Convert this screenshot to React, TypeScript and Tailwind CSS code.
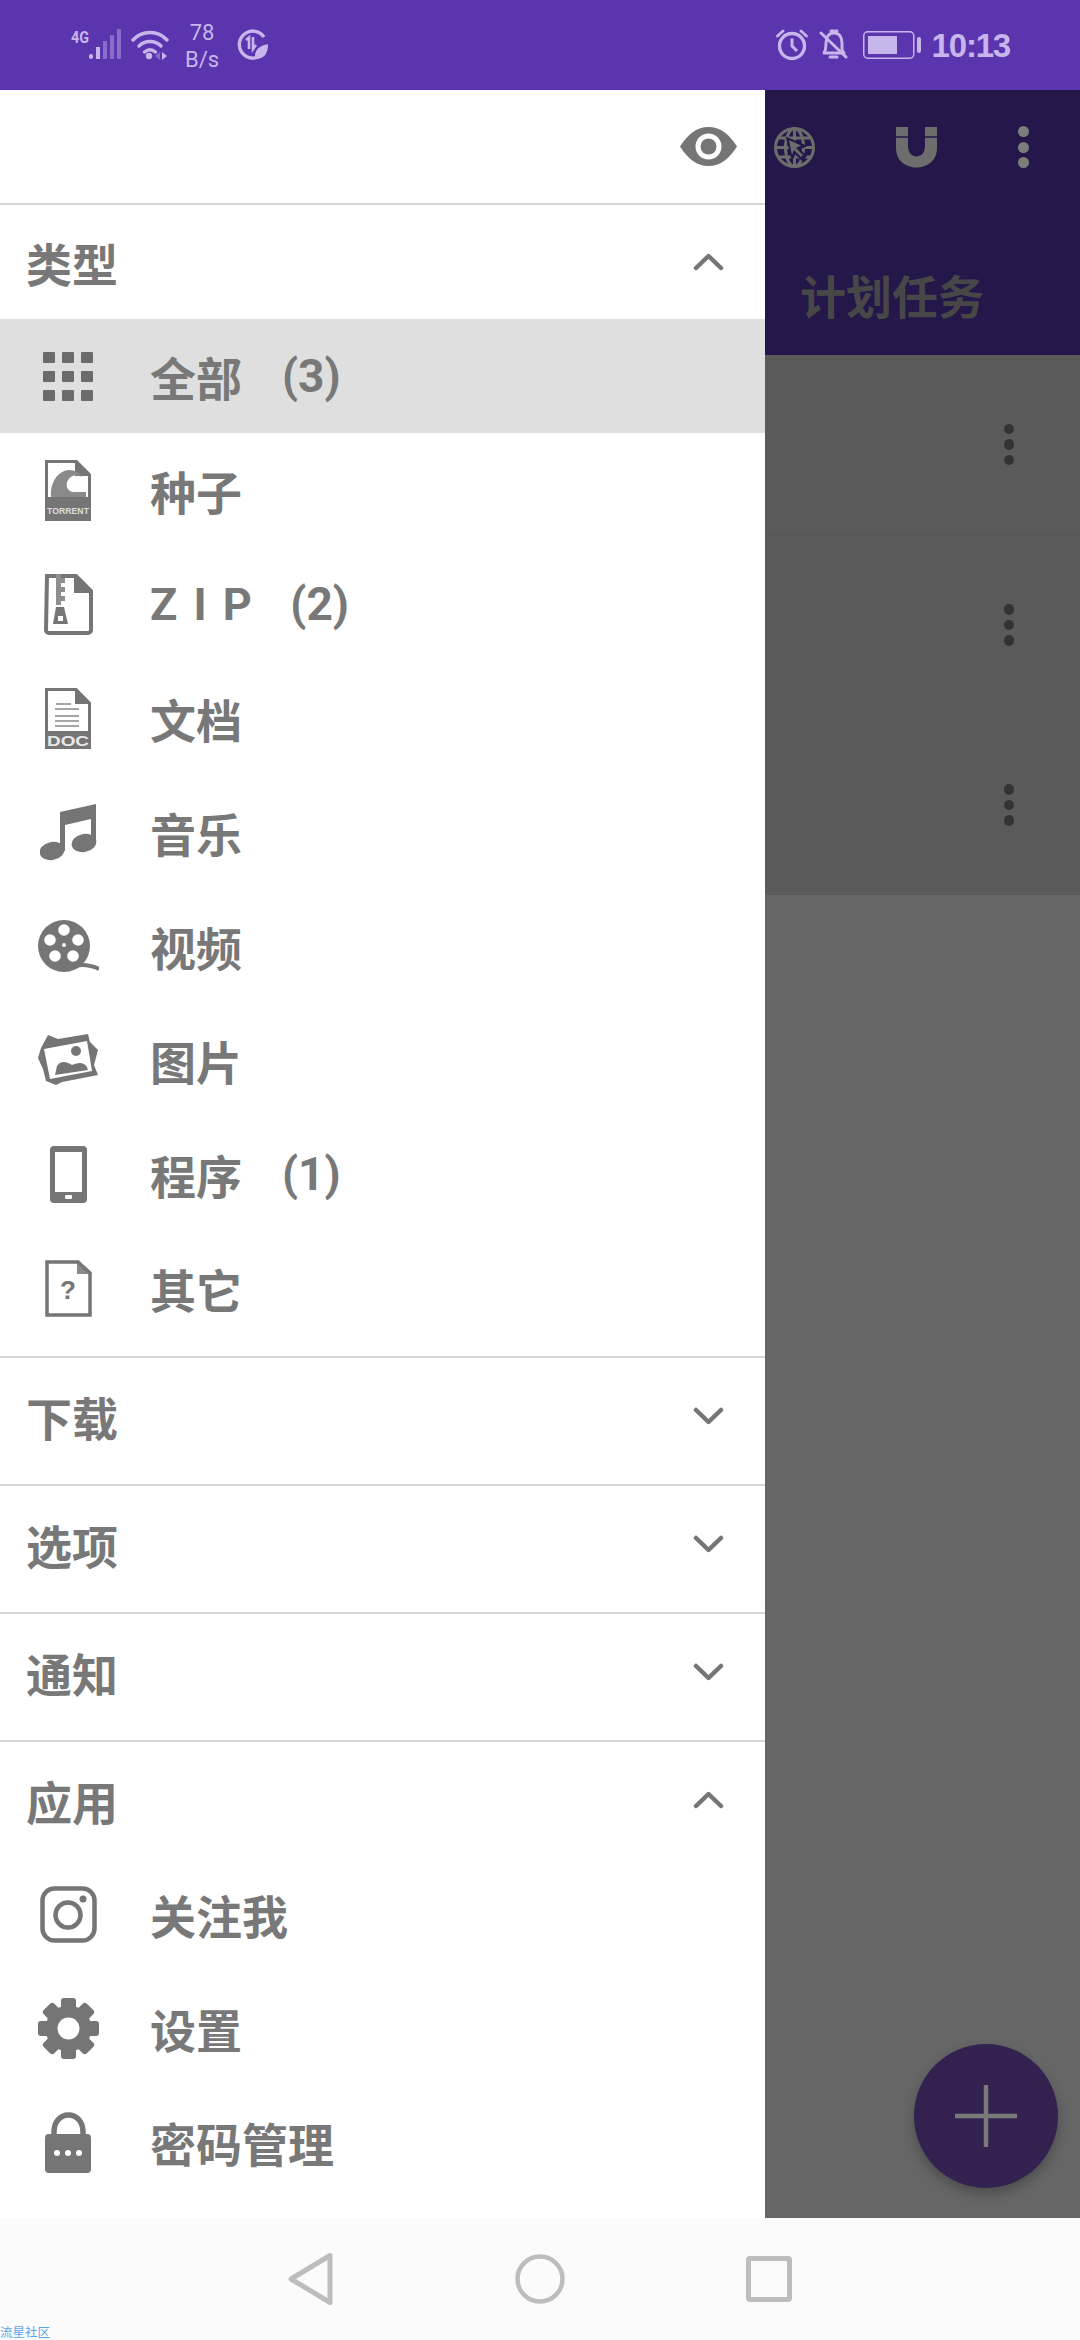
import React from "react";

const G = "#757575";

type IconProps = { w: number; h: number; children: React.ReactNode };
const Svg = ({ w, h, children }: IconProps) => (
  <svg width={w} height={h} viewBox={`0 0 ${w} ${h}`} className="block shrink-0">
    {children}
  </svg>
);

const GridIcon = () => (
  <Svg w={50} h={49}>
    {[0, 19, 38].flatMap((y) =>
      [0, 19, 38].map((x) => <rect key={`${x}-${y}`} x={x} y={y} width={12} height={11} rx={1} fill="#6b6b6b" />)
    )}
  </Svg>
);

const TorrentIcon = () => (
  <Svg w={46} h={61}>
    <path d="M0 0H32L46 14V61H0Z" fill={G} />
    <path d="M3 3H30V16H43V37H3Z" fill="#fff" />
    <path d="M6 37C5 22 13 11 24 10C30 10 35 13 37 17C32 14 26 15 23 20C20 25 22 31 28 32H41V37Z" fill="#8a8a8a" />
    <text x="23" y="54" textAnchor="middle" fontSize="9" fontWeight="700" fill="#ddd" fontFamily="Liberation Sans, sans-serif" textLength="42" lengthAdjust="spacingAndGlyphs">TORRENT</text>
  </Svg>
);

const ZipIcon = () => (
  <Svg w={49} h={61}>
    <path d="M3 2H32L47 17V56a3 3 0 0 1-3 3H5a3 3 0 0 1-3-3Z" fill="none" stroke={G} strokeWidth="4" />
    <path d="M30 1L48 19H30Z" fill={G} />
    <path d="M12 0H17V4H21V9H17V13H21V18H17V22H21V27H17V31H12Z" fill="#8f8f8f" />
    <path d="M12 33H20L24 50H9Z" fill={G} />
    <rect x="14" y="42" width="5" height="5" fill="#fff" />
  </Svg>
);

const DocIcon = () => (
  <Svg w={46} h={61}>
    <path d="M1.5 1.5H31L44.5 15V59.5H1.5Z" fill="#fff" stroke={G} strokeWidth="3" />
    <path d="M30 0L46 16H30Z" fill={G} />
    <path d="M11 16H26M10 21H34M10 28H34M10 33H34M10 38H34" stroke="#a5a5a5" strokeWidth="2" />
    <rect x="0" y="43" width="46" height="18" fill={G} />
    <text x="23" y="58" textAnchor="middle" fontSize="15.5" fontWeight="700" fill="#e8e8e8" fontFamily="Liberation Sans, sans-serif" textLength="42" lengthAdjust="spacingAndGlyphs">DOC</text>
  </Svg>
);

const MusicIcon = () => (
  <Svg w={57} h={57}>
    <path d="M20 47V8L56 0V40H51V15L25 21V47Z" fill={G} />
    <ellipse cx="12" cy="47" rx="12.5" ry="9" fill={G} transform="rotate(-12 12 47)" />
    <ellipse cx="44" cy="39" rx="12.5" ry="9" fill={G} transform="rotate(-12 44 39)" />
  </Svg>
);

const FilmIcon = () => (
  <Svg w={61} h={52}>
    <circle cx="26" cy="26" r="26" fill={G} />
    {[
      [26, 10],
      [12, 20],
      [40, 20],
      [17, 36],
      [35, 36],
    ].map(([x, y]) => (
      <circle key={`${x}-${y}`} cx={x} cy={y} r="5.8" fill="#fff" />
    ))}
    <circle cx="26" cy="25" r="2" fill="#fff" />
    <path d="M34 47C42 44 50 44 61 49" fill="none" stroke={G} strokeWidth="4" />
  </Svg>
);

const ImageIcon = () => (
  <Svg w={61} h={52}>
    <path d="M10 1L20 5L50 0L52 8L60 16L56 31L60 41L50 43L24 48L18 51L8 47L5 35L0 24L3 14Z" fill={G} />
    <path d="M6 15L49 7L54 37L12 45Z" fill="#fff" />
    <circle cx="38" cy="17" r="5" fill={G} />
    <path d="M17 41L19 32C24 25 30 29 34 31C39 29 45 27 49 33L50 36Z" fill={G} />
  </Svg>
);

const PhoneIcon = () => (
  <Svg w={37} h={57}>
    <rect width="37" height="57" rx="4" fill={G} />
    <rect x="5" y="6" width="27" height="40" fill="#fff" />
    <rect x="15" y="49" width="7" height="4" rx="1" fill="#fff" />
  </Svg>
);

const OtherIcon = () => (
  <Svg w={47} h={57}>
    <path d="M2 2H33L45 13V55H2Z" fill="#fff" stroke={G} strokeWidth="3.5" />
    <path d="M32 0L47 14H32Z" fill={G} opacity="0.85" />
    <text x="23" y="39" textAnchor="middle" fontSize="26" fontWeight="700" fill={G} fontFamily="Liberation Sans, sans-serif">?</text>
  </Svg>
);

const InstaIcon = () => (
  <Svg w={57} h={57}>
    <rect x="2.5" y="2.5" width="52" height="52" rx="12" fill="none" stroke={G} strokeWidth="4.5" />
    <circle cx="28" cy="29" r="12.5" fill="none" stroke={G} strokeWidth="4.5" />
    <circle cx="43" cy="13" r="3.5" fill={G} />
  </Svg>
);

const GearIcon = () => (
  <Svg w={61} h={61}>
    <g transform="translate(30.5 30.5)">
      {[0, 45, 90, 135, 180, 225, 270, 315].map((a) => (
        <rect key={a} x={-7.5} y={-30.5} width={15} height={16} rx={3} fill={G} transform={`rotate(${a})`} />
      ))}
      <circle r="23" fill={G} />
      <circle r="11" fill="#fff" />
    </g>
  </Svg>
);

const LockIcon = () => (
  <Svg w={47} h={61}>
    <path d="M9 26V20C9 10 15 3 23.5 3S38 10 38 20V26" fill="none" stroke={G} strokeWidth="5.5" />
    <rect y="22" width="46" height="39" rx="4" fill={G} />
    <circle cx="12" cy="41" r="3" fill="#fff" />
    <circle cx="23" cy="41" r="3" fill="#fff" />
    <circle cx="34" cy="41" r="3" fill="#fff" />
  </Svg>
);

const EyeIcon = () => (
  <Svg w={57} h={39}>
    <path d="M0 19.5C8 7 17 0 28.5 0S49 7 57 19.5C49 32 40 39 28.5 39S8 32 0 19.5Z" fill={G} />
    <circle cx="28.5" cy="19.5" r="13" fill="#fff" />
    <circle cx="28.5" cy="19.5" r="8" fill={G} />
  </Svg>
);

const Chevron = ({ up }: { up?: boolean }) => (
  <Svg w={31} h={18}>
    <path d={up ? "M3 15L15.5 3L28 15" : "M3 3L15.5 15L28 3"} fill="none" stroke={G} strokeWidth="4.5" strokeLinecap="round" strokeLinejoin="round" />
  </Svg>
);

const Row = ({ icon, label, count, active }: { icon: React.ReactNode; label: React.ReactNode; count?: string; active?: boolean }) => (
  <div className={`flex h-[114px] items-center ${active ? "bg-[#dfdfdf]" : ""}`}>
    <div className="flex w-[136px] justify-center">{icon}</div>
    <div className="flex items-center pl-[14px] text-[46px] leading-none font-bold whitespace-pre text-[#787878]">
      {label}
      {count && <span className="ml-[40px] font-['Roboto',sans-serif] text-[46px]">{count}</span>}
    </div>
  </div>
);

const Section = ({ title, up, h }: { title: string; up?: boolean; h: string }) => (
  <div className={`flex items-center justify-between pr-[41px] pl-[26px] ${h}`}>
    <span className="text-[46px] leading-none font-bold text-[#787878]">{title}</span>
    <Chevron up={up} />
  </div>
);

const Dots = ({ color, gap, r }: { color: string; gap: string; r: string }) => (
  <div className={`flex flex-col ${gap}`}>
    {[0, 1, 2].map((i) => (
      <div key={i} className={`rounded-full ${r} ${color}`} />
    ))}
  </div>
);

const StatusLeft = () => (
  <div className="flex items-center pl-[71px]">
    <Svg w={52} h={32}>
      <text x="0" y="14" fontSize="16" fontWeight="700" fill="#c7b6ec" fontFamily="Roboto, sans-serif" textLength="18" lengthAdjust="spacingAndGlyphs">4G</text>
      <rect x="18" y="25" width="4" height="5" rx="2" fill="#c7b6ec" />
      <rect x="25" y="18" width="4" height="12" fill="#c7b6ec" />
      <rect x="32" y="12" width="4" height="18" fill="#8a6cc9" />
      <rect x="39" y="6" width="4" height="24" fill="#8a6cc9" />
      <rect x="46" y="0" width="4" height="30" fill="#8a6cc9" />
    </Svg>
    <div className="ml-[8px]">
      <Svg w={38} h={32}>
        <g fill="none" stroke="#c7b6ec" strokeWidth="3.4" strokeLinecap="round">
          <path d="M2 11C11 1 27 1 36 11" />
          <path d="M8 17C14 11 24 11 30 17" />
          <path d="M13.5 23C17 20 21 20 24.5 23" />
        </g>
        <circle cx="18" cy="27" r="3.2" fill="#c7b6ec" />
        <path d="M29 23V31L24 27Z" fill="#8a6cc9" />
        <path d="M31 23V31L36 27Z" fill="#c7b6ec" />
      </Svg>
    </div>
    <div className="ml-[15px] w-[36px] pt-[2px] text-center font-['Roboto',sans-serif] text-[22px] leading-[27px] text-[#c7b6ec]">
      <div>78</div>
      <div>B/s</div>
    </div>
    <div className="ml-[16px]">
      <Svg w={32} h={32}>
        <path d="M24 27A13.5 13.5 0 1 1 28 8" fill="none" stroke="#c7b6ec" strokeWidth="3.4" />
        <path d="M10 11L13 8.5V20M17 8V20L20 16" fill="none" stroke="#c7b6ec" strokeWidth="2.6" />
        <path d="M19 30C18 22 22 17 32 15C32 25 28 30 19 30Z" fill="#c7b6ec" />
      </Svg>
    </div>
  </div>
);

const StatusRight = () => (
  <div className="flex items-center pr-[70px]">
    <Svg w={32} h={32}>
      <circle cx="16" cy="17" r="12.5" fill="none" stroke="#c7b6ec" strokeWidth="3.4" />
      <path d="M16 9.5V17L21 22" fill="none" stroke="#c7b6ec" strokeWidth="3" />
      <path d="M1.5 7L7 2M30.5 7L25 2" stroke="#c7b6ec" strokeWidth="2.8" strokeLinecap="round" />
    </Svg>
    <div className="ml-[11px]">
      <Svg w={29} h={32}>
        <path d="M5 24C7 21 7 19 7 14C7 8 10 4 15 4C20 4 23 8 23 14V21L25 24Z" fill="none" stroke="#c7b6ec" strokeWidth="3" strokeLinejoin="round" />
        <path d="M12 2H18M11 28H18" stroke="#c7b6ec" strokeWidth="3" strokeLinecap="round" />
        <path d="M2 4L27 28" stroke="#c7b6ec" strokeWidth="3" strokeLinecap="round" />
      </Svg>
    </div>
    <div className="ml-[15px]">
      <Svg w={59} h={28}>
        <rect x="0.75" y="0.75" width="50" height="26.5" rx="4" fill="none" stroke="#c7b6ec" strokeWidth="1.5" />
        <rect x="5" y="5" width="29" height="18" fill="#c7b6ec" />
        <rect x="54" y="6" width="4" height="16" rx="2" fill="#c7b6ec" />
      </Svg>
    </div>
    <div className="ml-[10px] font-['Liberation_Sans',sans-serif] text-[33px] leading-none font-bold tracking-[-1.2px] text-[#c7b6ec]">10:13</div>
  </div>
);

const GlobeIcon = () => (
  <Svg w={41} h={41}>
    <g fill="none" stroke="#6d6d6d" strokeWidth="3">
      <circle cx="20.5" cy="20.5" r="19" />
      <ellipse cx="20.5" cy="20.5" rx="9" ry="19" />
      <path d="M20.5 1V40M3 11H38M3 30H38M1.5 20.5H39.5" />
    </g>
    <path d="M14 12L30 19L23.5 22L31 29L28 32L21 24.5L18.5 30Z" fill="#25174a" stroke="#25174a" strokeWidth="3" />
    <path d="M15 13L27 18.5L22 21L29 28L27 30L20 23L18 28Z" fill="#6d6d6d" />
  </Svg>
);

const MagnetIcon = () => (
  <Svg w={41} h={41}>
    <path d="M0 0H12V19C12 33 29 33 29 19V0H41V21C41 47 0 47 0 21Z" fill="#6d6d6d" />
    <path d="M0 10H12M29 10H41" stroke="#25174a" strokeWidth="1.6" />
  </Svg>
);

export default function App() {
  return (
    <div className="relative flex h-[2340px] w-[1080px] flex-col overflow-hidden bg-white font-['Noto_Sans_CJK_SC','Roboto',sans-serif]">
      <div className="flex h-[90px] shrink-0 items-center justify-between bg-[#5a35ae]">
        <StatusLeft />
        <StatusRight />
      </div>

      <div className="flex h-[2128px] shrink-0">
        <div className="flex w-[765px] shrink-0 flex-col bg-white">
          <div className="flex h-[115px] items-center justify-end border-b-2 border-[#d6d6d6] pr-[28px]">
            <EyeIcon />
          </div>
          <Section title="类型" up h="h-[114px]" />
          <Row icon={<GridIcon />} label="全部" count="(3)" active />
          <Row icon={<TorrentIcon />} label="种子" />
          <Row icon={<ZipIcon />} label={<span className="mr-[-4px] font-['Roboto',sans-serif] text-[45px] tracking-[2.5px]">Z I P</span>} count="(2)" />
          <Row icon={<DocIcon />} label="文档" />
          <Row icon={<MusicIcon />} label="音乐" />
          <Row icon={<FilmIcon />} label="视频" />
          <Row icon={<ImageIcon />} label="图片" />
          <Row icon={<PhoneIcon />} label="程序" count="(1)" />
          <Row icon={<OtherIcon />} label="其它" />
          <div className="mt-[11px] border-t-2 border-[#d6d6d6]"><Section title="下载" h="h-[126px] pb-[10px]" /></div>
          <div className="border-t-2 border-[#d6d6d6]"><Section title="选项" h="h-[126px] pb-[10px]" /></div>
          <div className="border-t-2 border-[#d6d6d6]"><Section title="通知" h="h-[126px] pb-[10px]" /></div>
          <div className="border-t-2 border-[#d6d6d6]"><Section title="应用" up h="h-[115px]" /></div>
          <Row icon={<InstaIcon />} label="关注我" />
          <Row icon={<GearIcon />} label="设置" />
          <Row icon={<LockIcon />} label="密码管理" />
        </div>

        <div className="relative flex-1 bg-[#666666]">
          <div className="flex h-[265px] flex-col bg-[#25174a]">
            <div className="flex h-[114px] items-center pl-[9px]">
              <GlobeIcon />
              <div className="ml-[81px]"><MagnetIcon /></div>
              <div className="ml-[81px]"><Dots color="bg-[#7c7c7c]" gap="gap-[4.5px]" r="h-[11px] w-[11px]" /></div>
            </div>
            <div className="pt-[67px] pl-[35px] text-[46px] leading-none font-bold text-[#474747]">计划任务</div>
          </div>
          {[0, 1, 2].map((i) => (
            <div key={i} className={`flex h-[180px] items-center justify-end bg-[#5a5a5a] pr-[66px] ${i === 0 ? "border-b border-[#555555]" : ""}`}>
              <Dots color="bg-[#333333]" gap="gap-[5px]" r="h-[10.5px] w-[10.5px]" />
            </div>
          ))}
          <div className="absolute top-[1954px] left-[149px] flex h-[144px] w-[144px] items-center justify-center rounded-full bg-[#33224f] shadow-[0_6px_12px_rgba(0,0,0,0.25)]">
            <Svg w={62} h={62}>
              <path d="M31 0V62M0 31H62" stroke="#7a7a7a" strokeWidth="4.5" />
            </Svg>
          </div>
        </div>
      </div>

      <div className="relative flex h-[122px] shrink-0 items-center justify-center gap-[181px] bg-[#fbfbfb]">
        <Svg w={46} h={52}>
          <path d="M3 26L42 2.5V49.5Z" fill="none" stroke="#bdbdbd" strokeWidth="5" strokeLinejoin="round" />
        </Svg>
        <Svg w={50} h={50}>
          <circle cx="25" cy="25" r="22.5" fill="none" stroke="#bdbdbd" strokeWidth="4.5" />
        </Svg>
        <Svg w={46} h={46}>
          <rect x="2.5" y="2.5" width="41" height="41" rx="1.5" fill="none" stroke="#bdbdbd" strokeWidth="5" />
        </Svg>
        <div className="absolute bottom-[1px] left-0 text-[12.5px] leading-[15px] text-[#5aa5e6]">流星社区</div>
      </div>
    </div>
  );
}
